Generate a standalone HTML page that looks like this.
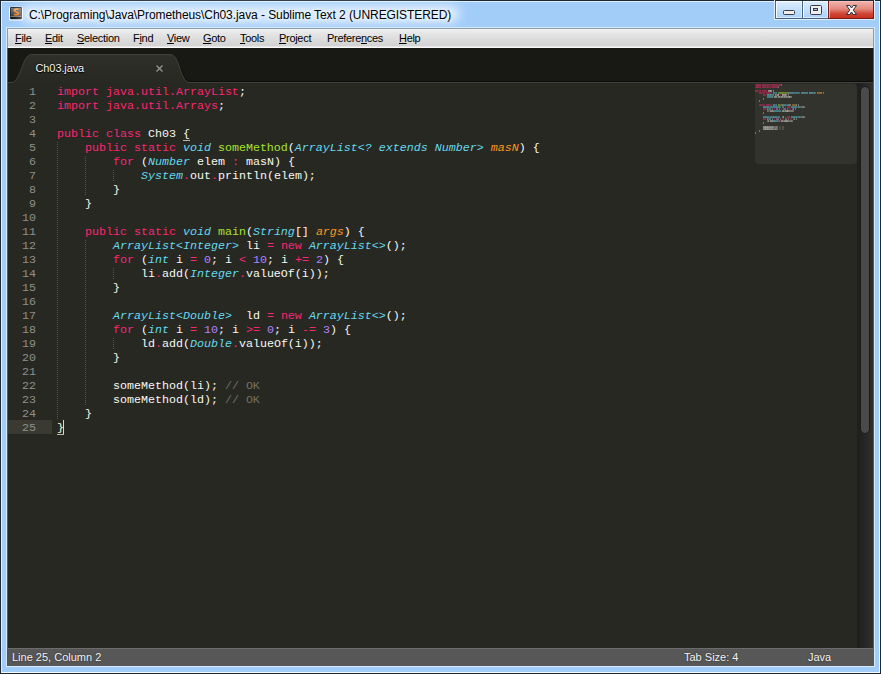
<!DOCTYPE html>
<html><head><meta charset="utf-8">
<style>
*{margin:0;padding:0;box-sizing:border-box}
html,body{width:881px;height:674px;overflow:hidden}
body{position:relative;background:#a3cdf9;font-family:"Liberation Sans",sans-serif}
.abs{position:absolute}
#frame-o{position:absolute;left:0;top:0;width:881px;height:674px;border:1px solid #1c2a38}
#frame-i{position:absolute;left:1px;top:1px;width:879px;height:672px;border:1px solid #dff0ff;border-bottom-color:#f4faff;border-right-color:#eef7ff}
#title{position:absolute;left:29px;top:7.5px;font-size:12px;letter-spacing:-0.07px;text-shadow:0 0 4px rgba(255,255,255,0.9),0 0 8px rgba(255,255,255,0.7);color:#000;white-space:nowrap;line-height:15px}
#glow{position:absolute;left:20px;top:5px;width:440px;height:18px;border-radius:9px;background:rgba(255,255,255,0.62);filter:blur(5px)}
#btns{position:absolute;left:775px;top:0;width:99px;height:19px}
.btn{position:absolute;top:1px;height:18px;border:1px solid #4a6380;border-top:none;box-shadow:inset 1px 1px 0 rgba(255,255,255,0.85),inset -1px -1px 0 rgba(255,255,255,0.5)}
#bmin{left:0;width:28px;background:linear-gradient(#dcedff,#c4e0fc 50%,#a9d1f9)}
#bmax{left:27px;width:27px;background:linear-gradient(#dcedff,#c4e0fc 50%,#a9d1f9)}
#bcls{left:53px;width:46px;background:linear-gradient(#f0b4ac,#e48c80 45%,#cf4535 75%,#c83224);border-color:#7c1a12;box-shadow:inset 1px 1px 0 rgba(255,200,190,0.7)}
#btnsh{position:absolute;left:774px;top:0;width:101px;height:20px;border:1px solid #dceeff;border-top:none}
#client{position:absolute;left:6px;top:27px;width:869px;height:640px;background:#4a5c70;border:1px solid #d4eaff}
#menubar{position:absolute;left:8px;top:29px;width:865px;height:19px;background:linear-gradient(#f3f3f3 0px,#e8e8e8 3px,#d2d2d2 17px,#f8f8f8 18px)}
.mi{position:absolute;top:32px;font-size:11px;color:#000;line-height:12px;letter-spacing:-0.3px}
.mi u{text-decoration:underline;text-underline-offset:1px}
#tabbar{position:absolute;left:8px;top:48px;width:865px;height:34px;background:#181814}
#editor{position:absolute;left:8px;top:83px;width:849px;height:565px;background:#272822}
#gutterhl{position:absolute;left:8px;top:420px;width:44px;height:14px;background:#3b3a32}
.ln{position:absolute;left:57px;height:14px;line-height:14px;font-family:"Liberation Mono",monospace;font-size:11.665px;white-space:pre;color:#f8f8f2}
.num{position:absolute;left:8px;width:28px;text-align:right;height:14px;line-height:14px;font-family:"Liberation Mono",monospace;font-size:11.665px;color:#8f908a}
.ul{color:#f8f8f2}
.uline{position:absolute;height:1px;width:7px;background:#b8b8b0}
.guide{position:absolute;width:1px;background:repeating-linear-gradient(#55554f 0 1px,transparent 1px 2px)}
#cursor{position:absolute;left:63px;top:420px;width:1px;height:14px;background:#d8d8d0}
#mmbox{position:absolute;left:755px;top:84px;width:102px;height:80px;background:#33332d;border-radius:4px}
.mm{position:absolute;left:755px;top:84px}
#scroll{position:absolute;left:857px;top:83px;width:16px;height:565px;background:linear-gradient(90deg,#1e1e1e,#2a2a2a 70%,#303030)}
#thumb{position:absolute;left:860px;top:86px;width:10px;height:348px;border-radius:5px;background:#4a4a4a;border:1px solid #1a1a1a}
#status{position:absolute;left:7px;top:648px;width:866px;height:18px;background:#575757;border-top:1px solid #6c6c6c;border-left:1px solid #4a5560}
.st{position:absolute;top:651px;font-size:11px;color:#f4f4f4;line-height:13px;white-space:nowrap;text-shadow:0 0 1.5px #222}
</style></head><body>
<div id="frame-o"></div><div id="frame-i"></div>
<svg class="abs" style="left:9px;top:6px" width="14" height="15" viewBox="0 0 14 15">
<defs><linearGradient id="ig" x1="0" y1="0" x2="0" y2="1"><stop offset="0" stop-color="#7a7a7a"/><stop offset="1" stop-color="#3c3c3c"/></linearGradient>
<linearGradient id="sg" x1="0" y1="0" x2="0" y2="1"><stop offset="0" stop-color="#f8b458"/><stop offset="1" stop-color="#f07414"/></linearGradient></defs>
<rect x="0" y="0.8" width="14" height="13.8" rx="1.5" fill="#f4f8ff"/>
<rect x="1" y="1" width="12" height="12.2" rx="1" fill="#262626"/>
<rect x="1.8" y="1.9" width="10.4" height="8.3" fill="url(#ig)"/>
<rect x="1.6" y="10.2" width="10.8" height="1" fill="#8c8c8c"/>
<rect x="1.6" y="11.2" width="10.8" height="1.6" fill="#121212"/>
<path d="M9.4 3.5 C8.4 2.7 5.4 2.8 5.4 4.5 C5.4 6.1 9.3 5.8 9.3 7.4 C9.3 9 6.6 9.1 5 8.3" stroke="url(#sg)" stroke-width="1.7" fill="none"/>
</svg>
<div id="glow"></div>
<div id="title">C:\Programing\Java\Prometheus\Ch03.java - Sublime Text 2 (UNREGISTERED)</div>
<div id="btnsh"></div><div id="btns">
 <div class="btn" id="bmin"></div><div class="btn" id="bmax"></div><div class="btn" id="bcls"></div>
 <div class="abs" style="left:8px;top:10px;width:12px;height:5px;background:#eeeeee;border:1px solid #3a3a48;border-radius:1.5px"></div>
 <div class="abs" style="left:35px;top:5px;width:12px;height:10px;background:#eeeeee;border:1.5px solid #3a3a48;border-radius:1.5px"><div class="abs" style="left:2px;top:2px;width:5px;height:3px;background:#9cc8f0;border:1px solid #3a3a48"></div></div>
 <svg class="abs" style="left:71px;top:5px" width="11" height="10" viewBox="0 0 11 10"><path d="M0.5 0.5 L3.8 0.5 L5.5 3 L7.2 0.5 L10.5 0.5 L7.3 5 L10.5 9.5 L7.2 9.5 L5.5 7 L3.8 9.5 L0.5 9.5 L3.7 5 Z" fill="#f4f4f4" stroke="#30303c" stroke-width="1" stroke-linejoin="round"/></svg>
</div>
<div id="client"></div>
<div class="abs" style="left:7px;top:28px;width:867px;height:20px;background:#8a9db2"></div>
<div id="menubar"></div>
<div class="mi" style="left:15px"><u>F</u>ile</div>
<div class="mi" style="left:45px"><u>E</u>dit</div>
<div class="mi" style="left:77px"><u>S</u>election</div>
<div class="mi" style="left:133px">F<u>i</u>nd</div>
<div class="mi" style="left:167px"><u>V</u>iew</div>
<div class="mi" style="left:203px"><u>G</u>oto</div>
<div class="mi" style="left:240px"><u>T</u>ools</div>
<div class="mi" style="left:279px"><u>P</u>roject</div>
<div class="mi" style="left:327px">Prefere<u>n</u>ces</div>
<div class="mi" style="left:399px"><u>H</u>elp</div>
<div id="tabbar"></div>
<svg class="abs" style="left:8px;top:48px" width="865" height="36" viewBox="0 0 865 36">
<defs><linearGradient id="tg" x1="0" y1="0" x2="0" y2="1"><stop offset="0" stop-color="#30302b"/><stop offset="1" stop-color="#272822"/></linearGradient></defs>
<path d="M-2 36 L-2 34.5 L4 34.5 C8 34.5 11 27 13.6 20.5 C16 13 19 6.5 23.5 6.5 L162.5 6.5 C167 6.5 169.5 13 171.8 20.5 C174.2 27 177 34.5 181.2 34.5 L181.2 36 Z" fill="url(#tg)"/>
<path d="M172.8 20.5 C175.2 27 178 33.5 182.2 33.5 L870 33.5" fill="none" stroke="#0c0c0a" stroke-width="1"/>
<path d="M-2 34.5 L4 34.5 C8 34.5 11 27 13.6 20.5 C16 13 19 6.5 23.5 6.5 L162.5 6.5 C167 6.5 169.5 13 171.8 20.5 C174.2 27 177 34.5 181.2 34.5 L870 34.5" fill="none" stroke="#41413b" stroke-width="1"/>
</svg>
<div class="abs" style="left:35.5px;top:62px;font-size:11px;color:#f4f4f4;line-height:13px;letter-spacing:-0.1px;text-shadow:0 0 1.5px #000,0 1px 1px #000">Ch03.java</div>
<svg class="abs" style="left:155px;top:64px" width="9" height="9" viewBox="0 0 9 9"><path d="M1.5 1.5 L7.5 7.5 M7.5 1.5 L1.5 7.5" stroke="#141411" stroke-width="3" stroke-opacity="0.6"/><path d="M1.5 1.5 L7.5 7.5 M7.5 1.5 L1.5 7.5" stroke="#90908b" stroke-width="1.7"/></svg>
<div id="editor"></div>
<div id="gutterhl"></div>
<div id="mmbox"></div>
<svg class="mm" width="110" height="60" viewBox="0 0 110 60"><rect x="0" y="0.3" width="1" height="1.3" fill="#f92672" fill-opacity="0.44"/><rect x="1" y="0.3" width="1" height="1.3" fill="#f92672" fill-opacity="0.80"/><rect x="2" y="0.3" width="1" height="1.3" fill="#f92672" fill-opacity="0.66"/><rect x="3" y="0.3" width="1" height="1.3" fill="#f92672" fill-opacity="0.66"/><rect x="4" y="0.3" width="1" height="1.3" fill="#f92672" fill-opacity="0.66"/><rect x="5" y="0.3" width="1" height="1.3" fill="#f92672" fill-opacity="0.66"/><rect x="7" y="0.3" width="1" height="1.3" fill="#f92672" fill-opacity="0.66"/><rect x="8" y="0.3" width="1" height="1.3" fill="#f92672" fill-opacity="0.66"/><rect x="9" y="0.3" width="1" height="1.3" fill="#f92672" fill-opacity="0.66"/><rect x="10" y="0.3" width="1" height="1.3" fill="#f92672" fill-opacity="0.66"/><rect x="11" y="0.3" width="1" height="1.3" fill="#f92672" fill-opacity="0.44"/><rect x="12" y="0.3" width="1" height="1.3" fill="#f92672" fill-opacity="0.66"/><rect x="13" y="0.3" width="1" height="1.3" fill="#f92672" fill-opacity="0.66"/><rect x="14" y="0.3" width="1" height="1.3" fill="#f92672" fill-opacity="0.44"/><rect x="15" y="0.3" width="1" height="1.3" fill="#f92672" fill-opacity="0.44"/><rect x="16" y="0.3" width="1" height="1.3" fill="#f92672" fill-opacity="0.44"/><rect x="17" y="0.3" width="1" height="1.3" fill="#f92672" fill-opacity="0.66"/><rect x="18" y="0.3" width="1" height="1.3" fill="#f92672" fill-opacity="0.66"/><rect x="19" y="0.3" width="1" height="1.3" fill="#f92672" fill-opacity="0.66"/><rect x="20" y="0.3" width="1" height="1.3" fill="#f92672" fill-opacity="0.66"/><rect x="21" y="0.3" width="1" height="1.3" fill="#f92672" fill-opacity="0.66"/><rect x="22" y="0.3" width="1" height="1.3" fill="#f92672" fill-opacity="0.66"/><rect x="23" y="0.3" width="1" height="1.3" fill="#f92672" fill-opacity="0.44"/><rect x="24" y="0.3" width="1" height="1.3" fill="#f92672" fill-opacity="0.66"/><rect x="25" y="0.3" width="1" height="1.3" fill="#f92672" fill-opacity="0.66"/><rect x="26" y="0.3" width="1" height="1.3" fill="#f8f8f2" fill-opacity="0.44"/><rect x="0" y="2.4" width="1" height="1.3" fill="#f92672" fill-opacity="0.44"/><rect x="1" y="2.4" width="1" height="1.3" fill="#f92672" fill-opacity="0.80"/><rect x="2" y="2.4" width="1" height="1.3" fill="#f92672" fill-opacity="0.66"/><rect x="3" y="2.4" width="1" height="1.3" fill="#f92672" fill-opacity="0.66"/><rect x="4" y="2.4" width="1" height="1.3" fill="#f92672" fill-opacity="0.66"/><rect x="5" y="2.4" width="1" height="1.3" fill="#f92672" fill-opacity="0.66"/><rect x="7" y="2.4" width="1" height="1.3" fill="#f92672" fill-opacity="0.66"/><rect x="8" y="2.4" width="1" height="1.3" fill="#f92672" fill-opacity="0.66"/><rect x="9" y="2.4" width="1" height="1.3" fill="#f92672" fill-opacity="0.66"/><rect x="10" y="2.4" width="1" height="1.3" fill="#f92672" fill-opacity="0.66"/><rect x="11" y="2.4" width="1" height="1.3" fill="#f92672" fill-opacity="0.44"/><rect x="12" y="2.4" width="1" height="1.3" fill="#f92672" fill-opacity="0.66"/><rect x="13" y="2.4" width="1" height="1.3" fill="#f92672" fill-opacity="0.66"/><rect x="14" y="2.4" width="1" height="1.3" fill="#f92672" fill-opacity="0.44"/><rect x="15" y="2.4" width="1" height="1.3" fill="#f92672" fill-opacity="0.44"/><rect x="16" y="2.4" width="1" height="1.3" fill="#f92672" fill-opacity="0.44"/><rect x="17" y="2.4" width="1" height="1.3" fill="#f92672" fill-opacity="0.66"/><rect x="18" y="2.4" width="1" height="1.3" fill="#f92672" fill-opacity="0.66"/><rect x="19" y="2.4" width="1" height="1.3" fill="#f92672" fill-opacity="0.66"/><rect x="20" y="2.4" width="1" height="1.3" fill="#f92672" fill-opacity="0.66"/><rect x="21" y="2.4" width="1" height="1.3" fill="#f92672" fill-opacity="0.66"/><rect x="22" y="2.4" width="1" height="1.3" fill="#f92672" fill-opacity="0.66"/><rect x="23" y="2.4" width="1" height="1.3" fill="#f8f8f2" fill-opacity="0.44"/><rect x="0" y="6.3" width="1" height="1.3" fill="#f92672" fill-opacity="0.66"/><rect x="1" y="6.3" width="1" height="1.3" fill="#f92672" fill-opacity="0.66"/><rect x="2" y="6.3" width="1" height="1.3" fill="#f92672" fill-opacity="0.66"/><rect x="3" y="6.3" width="1" height="1.3" fill="#f92672" fill-opacity="0.44"/><rect x="4" y="6.3" width="1" height="1.3" fill="#f92672" fill-opacity="0.44"/><rect x="5" y="6.3" width="1" height="1.3" fill="#f92672" fill-opacity="0.66"/><rect x="7" y="6.3" width="1" height="1.3" fill="#f92672" fill-opacity="0.66"/><rect x="8" y="6.3" width="1" height="1.3" fill="#f92672" fill-opacity="0.44"/><rect x="9" y="6.3" width="1" height="1.3" fill="#f92672" fill-opacity="0.66"/><rect x="10" y="6.3" width="1" height="1.3" fill="#f92672" fill-opacity="0.66"/><rect x="11" y="6.3" width="1" height="1.3" fill="#f92672" fill-opacity="0.66"/><rect x="13" y="6.3" width="1" height="1.3" fill="#f8f8f2" fill-opacity="0.66"/><rect x="14" y="6.3" width="1" height="1.3" fill="#f8f8f2" fill-opacity="0.66"/><rect x="15" y="6.3" width="1" height="1.3" fill="#f8f8f2" fill-opacity="0.80"/><rect x="16" y="6.3" width="1" height="1.3" fill="#f8f8f2" fill-opacity="0.66"/><rect x="18" y="6.3" width="1" height="1.3" fill="#f8f8f2" fill-opacity="0.53"/><rect x="4" y="8.3" width="1" height="1.3" fill="#f92672" fill-opacity="0.66"/><rect x="5" y="8.3" width="1" height="1.3" fill="#f92672" fill-opacity="0.66"/><rect x="6" y="8.3" width="1" height="1.3" fill="#f92672" fill-opacity="0.66"/><rect x="7" y="8.3" width="1" height="1.3" fill="#f92672" fill-opacity="0.44"/><rect x="8" y="8.3" width="1" height="1.3" fill="#f92672" fill-opacity="0.44"/><rect x="9" y="8.3" width="1" height="1.3" fill="#f92672" fill-opacity="0.66"/><rect x="11" y="8.3" width="1" height="1.3" fill="#f92672" fill-opacity="0.66"/><rect x="12" y="8.3" width="1" height="1.3" fill="#f92672" fill-opacity="0.66"/><rect x="13" y="8.3" width="1" height="1.3" fill="#f92672" fill-opacity="0.66"/><rect x="14" y="8.3" width="1" height="1.3" fill="#f92672" fill-opacity="0.66"/><rect x="15" y="8.3" width="1" height="1.3" fill="#f92672" fill-opacity="0.44"/><rect x="16" y="8.3" width="1" height="1.3" fill="#f92672" fill-opacity="0.66"/><rect x="18" y="8.3" width="1" height="1.3" fill="#66d9ef" fill-opacity="0.66"/><rect x="19" y="8.3" width="1" height="1.3" fill="#66d9ef" fill-opacity="0.66"/><rect x="20" y="8.3" width="1" height="1.3" fill="#66d9ef" fill-opacity="0.44"/><rect x="21" y="8.3" width="1" height="1.3" fill="#66d9ef" fill-opacity="0.66"/><rect x="23" y="8.3" width="1" height="1.3" fill="#a6e22e" fill-opacity="0.66"/><rect x="24" y="8.3" width="1" height="1.3" fill="#a6e22e" fill-opacity="0.66"/><rect x="25" y="8.3" width="1" height="1.3" fill="#a6e22e" fill-opacity="0.80"/><rect x="26" y="8.3" width="1" height="1.3" fill="#a6e22e" fill-opacity="0.66"/><rect x="27" y="8.3" width="1" height="1.3" fill="#a6e22e" fill-opacity="0.80"/><rect x="28" y="8.3" width="1" height="1.3" fill="#a6e22e" fill-opacity="0.66"/><rect x="29" y="8.3" width="1" height="1.3" fill="#a6e22e" fill-opacity="0.66"/><rect x="30" y="8.3" width="1" height="1.3" fill="#a6e22e" fill-opacity="0.66"/><rect x="31" y="8.3" width="1" height="1.3" fill="#a6e22e" fill-opacity="0.66"/><rect x="32" y="8.3" width="1" height="1.3" fill="#a6e22e" fill-opacity="0.66"/><rect x="33" y="8.3" width="1" height="1.3" fill="#f8f8f2" fill-opacity="0.53"/><rect x="34" y="8.3" width="1" height="1.3" fill="#66d9ef" fill-opacity="0.66"/><rect x="35" y="8.3" width="1" height="1.3" fill="#66d9ef" fill-opacity="0.66"/><rect x="36" y="8.3" width="1" height="1.3" fill="#66d9ef" fill-opacity="0.66"/><rect x="37" y="8.3" width="1" height="1.3" fill="#66d9ef" fill-opacity="0.66"/><rect x="38" y="8.3" width="1" height="1.3" fill="#66d9ef" fill-opacity="0.66"/><rect x="39" y="8.3" width="1" height="1.3" fill="#66d9ef" fill-opacity="0.66"/><rect x="40" y="8.3" width="1" height="1.3" fill="#66d9ef" fill-opacity="0.44"/><rect x="41" y="8.3" width="1" height="1.3" fill="#66d9ef" fill-opacity="0.66"/><rect x="42" y="8.3" width="1" height="1.3" fill="#66d9ef" fill-opacity="0.66"/><rect x="43" y="8.3" width="1" height="1.3" fill="#66d9ef" fill-opacity="0.53"/><rect x="44" y="8.3" width="1" height="1.3" fill="#66d9ef" fill-opacity="0.53"/><rect x="46" y="8.3" width="1" height="1.3" fill="#66d9ef" fill-opacity="0.66"/><rect x="47" y="8.3" width="1" height="1.3" fill="#66d9ef" fill-opacity="0.66"/><rect x="48" y="8.3" width="1" height="1.3" fill="#66d9ef" fill-opacity="0.66"/><rect x="49" y="8.3" width="1" height="1.3" fill="#66d9ef" fill-opacity="0.66"/><rect x="50" y="8.3" width="1" height="1.3" fill="#66d9ef" fill-opacity="0.66"/><rect x="51" y="8.3" width="1" height="1.3" fill="#66d9ef" fill-opacity="0.66"/><rect x="52" y="8.3" width="1" height="1.3" fill="#66d9ef" fill-opacity="0.66"/><rect x="54" y="8.3" width="1" height="1.3" fill="#66d9ef" fill-opacity="0.80"/><rect x="55" y="8.3" width="1" height="1.3" fill="#66d9ef" fill-opacity="0.66"/><rect x="56" y="8.3" width="1" height="1.3" fill="#66d9ef" fill-opacity="0.80"/><rect x="57" y="8.3" width="1" height="1.3" fill="#66d9ef" fill-opacity="0.66"/><rect x="58" y="8.3" width="1" height="1.3" fill="#66d9ef" fill-opacity="0.66"/><rect x="59" y="8.3" width="1" height="1.3" fill="#66d9ef" fill-opacity="0.66"/><rect x="60" y="8.3" width="1" height="1.3" fill="#66d9ef" fill-opacity="0.53"/><rect x="62" y="8.3" width="1" height="1.3" fill="#fd971f" fill-opacity="0.80"/><rect x="63" y="8.3" width="1" height="1.3" fill="#fd971f" fill-opacity="0.66"/><rect x="64" y="8.3" width="1" height="1.3" fill="#fd971f" fill-opacity="0.66"/><rect x="65" y="8.3" width="1" height="1.3" fill="#fd971f" fill-opacity="0.80"/><rect x="66" y="8.3" width="1" height="1.3" fill="#f8f8f2" fill-opacity="0.53"/><rect x="68" y="8.3" width="1" height="1.3" fill="#f8f8f2" fill-opacity="0.53"/><rect x="8" y="10.3" width="1" height="1.3" fill="#f92672" fill-opacity="0.66"/><rect x="9" y="10.3" width="1" height="1.3" fill="#f92672" fill-opacity="0.66"/><rect x="10" y="10.3" width="1" height="1.3" fill="#f92672" fill-opacity="0.66"/><rect x="12" y="10.3" width="1" height="1.3" fill="#f8f8f2" fill-opacity="0.53"/><rect x="13" y="10.3" width="1" height="1.3" fill="#66d9ef" fill-opacity="0.80"/><rect x="14" y="10.3" width="1" height="1.3" fill="#66d9ef" fill-opacity="0.66"/><rect x="15" y="10.3" width="1" height="1.3" fill="#66d9ef" fill-opacity="0.80"/><rect x="16" y="10.3" width="1" height="1.3" fill="#66d9ef" fill-opacity="0.66"/><rect x="17" y="10.3" width="1" height="1.3" fill="#66d9ef" fill-opacity="0.66"/><rect x="18" y="10.3" width="1" height="1.3" fill="#66d9ef" fill-opacity="0.66"/><rect x="20" y="10.3" width="1" height="1.3" fill="#f8f8f2" fill-opacity="0.66"/><rect x="21" y="10.3" width="1" height="1.3" fill="#f8f8f2" fill-opacity="0.44"/><rect x="22" y="10.3" width="1" height="1.3" fill="#f8f8f2" fill-opacity="0.66"/><rect x="23" y="10.3" width="1" height="1.3" fill="#f8f8f2" fill-opacity="0.80"/><rect x="25" y="10.3" width="1" height="1.3" fill="#f92672" fill-opacity="0.44"/><rect x="27" y="10.3" width="1" height="1.3" fill="#f8f8f2" fill-opacity="0.80"/><rect x="28" y="10.3" width="1" height="1.3" fill="#f8f8f2" fill-opacity="0.66"/><rect x="29" y="10.3" width="1" height="1.3" fill="#f8f8f2" fill-opacity="0.66"/><rect x="30" y="10.3" width="1" height="1.3" fill="#f8f8f2" fill-opacity="0.80"/><rect x="31" y="10.3" width="1" height="1.3" fill="#f8f8f2" fill-opacity="0.53"/><rect x="33" y="10.3" width="1" height="1.3" fill="#f8f8f2" fill-opacity="0.53"/><rect x="12" y="12.3" width="1" height="1.3" fill="#66d9ef" fill-opacity="0.66"/><rect x="13" y="12.3" width="1" height="1.3" fill="#66d9ef" fill-opacity="0.66"/><rect x="14" y="12.3" width="1" height="1.3" fill="#66d9ef" fill-opacity="0.66"/><rect x="15" y="12.3" width="1" height="1.3" fill="#66d9ef" fill-opacity="0.66"/><rect x="16" y="12.3" width="1" height="1.3" fill="#66d9ef" fill-opacity="0.66"/><rect x="17" y="12.3" width="1" height="1.3" fill="#66d9ef" fill-opacity="0.80"/><rect x="18" y="12.3" width="1" height="1.3" fill="#f92672" fill-opacity="0.44"/><rect x="19" y="12.3" width="1" height="1.3" fill="#f8f8f2" fill-opacity="0.66"/><rect x="20" y="12.3" width="1" height="1.3" fill="#f8f8f2" fill-opacity="0.66"/><rect x="21" y="12.3" width="1" height="1.3" fill="#f8f8f2" fill-opacity="0.66"/><rect x="22" y="12.3" width="1" height="1.3" fill="#f92672" fill-opacity="0.44"/><rect x="23" y="12.3" width="1" height="1.3" fill="#f8f8f2" fill-opacity="0.66"/><rect x="24" y="12.3" width="1" height="1.3" fill="#f8f8f2" fill-opacity="0.66"/><rect x="25" y="12.3" width="1" height="1.3" fill="#f8f8f2" fill-opacity="0.44"/><rect x="26" y="12.3" width="1" height="1.3" fill="#f8f8f2" fill-opacity="0.66"/><rect x="27" y="12.3" width="1" height="1.3" fill="#f8f8f2" fill-opacity="0.66"/><rect x="28" y="12.3" width="1" height="1.3" fill="#f8f8f2" fill-opacity="0.44"/><rect x="29" y="12.3" width="1" height="1.3" fill="#f8f8f2" fill-opacity="0.66"/><rect x="30" y="12.3" width="1" height="1.3" fill="#f8f8f2" fill-opacity="0.53"/><rect x="31" y="12.3" width="1" height="1.3" fill="#f8f8f2" fill-opacity="0.66"/><rect x="32" y="12.3" width="1" height="1.3" fill="#f8f8f2" fill-opacity="0.44"/><rect x="33" y="12.3" width="1" height="1.3" fill="#f8f8f2" fill-opacity="0.66"/><rect x="34" y="12.3" width="1" height="1.3" fill="#f8f8f2" fill-opacity="0.80"/><rect x="35" y="12.3" width="1" height="1.3" fill="#f8f8f2" fill-opacity="0.53"/><rect x="36" y="12.3" width="1" height="1.3" fill="#f8f8f2" fill-opacity="0.44"/><rect x="8" y="14.3" width="1" height="1.3" fill="#f8f8f2" fill-opacity="0.53"/><rect x="4" y="16.4" width="1" height="1.3" fill="#f8f8f2" fill-opacity="0.53"/><rect x="4" y="20.4" width="1" height="1.3" fill="#f92672" fill-opacity="0.66"/><rect x="5" y="20.4" width="1" height="1.3" fill="#f92672" fill-opacity="0.66"/><rect x="6" y="20.4" width="1" height="1.3" fill="#f92672" fill-opacity="0.66"/><rect x="7" y="20.4" width="1" height="1.3" fill="#f92672" fill-opacity="0.44"/><rect x="8" y="20.4" width="1" height="1.3" fill="#f92672" fill-opacity="0.44"/><rect x="9" y="20.4" width="1" height="1.3" fill="#f92672" fill-opacity="0.66"/><rect x="11" y="20.4" width="1" height="1.3" fill="#f92672" fill-opacity="0.66"/><rect x="12" y="20.4" width="1" height="1.3" fill="#f92672" fill-opacity="0.66"/><rect x="13" y="20.4" width="1" height="1.3" fill="#f92672" fill-opacity="0.66"/><rect x="14" y="20.4" width="1" height="1.3" fill="#f92672" fill-opacity="0.66"/><rect x="15" y="20.4" width="1" height="1.3" fill="#f92672" fill-opacity="0.44"/><rect x="16" y="20.4" width="1" height="1.3" fill="#f92672" fill-opacity="0.66"/><rect x="18" y="20.4" width="1" height="1.3" fill="#66d9ef" fill-opacity="0.66"/><rect x="19" y="20.4" width="1" height="1.3" fill="#66d9ef" fill-opacity="0.66"/><rect x="20" y="20.4" width="1" height="1.3" fill="#66d9ef" fill-opacity="0.44"/><rect x="21" y="20.4" width="1" height="1.3" fill="#66d9ef" fill-opacity="0.66"/><rect x="23" y="20.4" width="1" height="1.3" fill="#a6e22e" fill-opacity="0.80"/><rect x="24" y="20.4" width="1" height="1.3" fill="#a6e22e" fill-opacity="0.66"/><rect x="25" y="20.4" width="1" height="1.3" fill="#a6e22e" fill-opacity="0.44"/><rect x="26" y="20.4" width="1" height="1.3" fill="#a6e22e" fill-opacity="0.66"/><rect x="27" y="20.4" width="1" height="1.3" fill="#f8f8f2" fill-opacity="0.53"/><rect x="28" y="20.4" width="1" height="1.3" fill="#66d9ef" fill-opacity="0.66"/><rect x="29" y="20.4" width="1" height="1.3" fill="#66d9ef" fill-opacity="0.66"/><rect x="30" y="20.4" width="1" height="1.3" fill="#66d9ef" fill-opacity="0.66"/><rect x="31" y="20.4" width="1" height="1.3" fill="#66d9ef" fill-opacity="0.44"/><rect x="32" y="20.4" width="1" height="1.3" fill="#66d9ef" fill-opacity="0.66"/><rect x="33" y="20.4" width="1" height="1.3" fill="#66d9ef" fill-opacity="0.66"/><rect x="34" y="20.4" width="1" height="1.3" fill="#f8f8f2" fill-opacity="0.53"/><rect x="35" y="20.4" width="1" height="1.3" fill="#f8f8f2" fill-opacity="0.53"/><rect x="37" y="20.4" width="1" height="1.3" fill="#fd971f" fill-opacity="0.66"/><rect x="38" y="20.4" width="1" height="1.3" fill="#fd971f" fill-opacity="0.66"/><rect x="39" y="20.4" width="1" height="1.3" fill="#fd971f" fill-opacity="0.66"/><rect x="40" y="20.4" width="1" height="1.3" fill="#fd971f" fill-opacity="0.66"/><rect x="41" y="20.4" width="1" height="1.3" fill="#f8f8f2" fill-opacity="0.53"/><rect x="43" y="20.4" width="1" height="1.3" fill="#f8f8f2" fill-opacity="0.53"/><rect x="8" y="22.4" width="1" height="1.3" fill="#66d9ef" fill-opacity="0.66"/><rect x="9" y="22.4" width="1" height="1.3" fill="#66d9ef" fill-opacity="0.66"/><rect x="10" y="22.4" width="1" height="1.3" fill="#66d9ef" fill-opacity="0.66"/><rect x="11" y="22.4" width="1" height="1.3" fill="#66d9ef" fill-opacity="0.66"/><rect x="12" y="22.4" width="1" height="1.3" fill="#66d9ef" fill-opacity="0.66"/><rect x="13" y="22.4" width="1" height="1.3" fill="#66d9ef" fill-opacity="0.66"/><rect x="14" y="22.4" width="1" height="1.3" fill="#66d9ef" fill-opacity="0.44"/><rect x="15" y="22.4" width="1" height="1.3" fill="#66d9ef" fill-opacity="0.66"/><rect x="16" y="22.4" width="1" height="1.3" fill="#66d9ef" fill-opacity="0.66"/><rect x="17" y="22.4" width="1" height="1.3" fill="#66d9ef" fill-opacity="0.53"/><rect x="18" y="22.4" width="1" height="1.3" fill="#66d9ef" fill-opacity="0.66"/><rect x="19" y="22.4" width="1" height="1.3" fill="#66d9ef" fill-opacity="0.66"/><rect x="20" y="22.4" width="1" height="1.3" fill="#66d9ef" fill-opacity="0.66"/><rect x="21" y="22.4" width="1" height="1.3" fill="#66d9ef" fill-opacity="0.66"/><rect x="22" y="22.4" width="1" height="1.3" fill="#66d9ef" fill-opacity="0.66"/><rect x="23" y="22.4" width="1" height="1.3" fill="#66d9ef" fill-opacity="0.66"/><rect x="24" y="22.4" width="1" height="1.3" fill="#66d9ef" fill-opacity="0.66"/><rect x="25" y="22.4" width="1" height="1.3" fill="#66d9ef" fill-opacity="0.53"/><rect x="27" y="22.4" width="1" height="1.3" fill="#f8f8f2" fill-opacity="0.44"/><rect x="28" y="22.4" width="1" height="1.3" fill="#f8f8f2" fill-opacity="0.44"/><rect x="30" y="22.4" width="1" height="1.3" fill="#f92672" fill-opacity="0.53"/><rect x="32" y="22.4" width="1" height="1.3" fill="#f92672" fill-opacity="0.66"/><rect x="33" y="22.4" width="1" height="1.3" fill="#f92672" fill-opacity="0.66"/><rect x="34" y="22.4" width="1" height="1.3" fill="#f92672" fill-opacity="0.80"/><rect x="36" y="22.4" width="1" height="1.3" fill="#66d9ef" fill-opacity="0.66"/><rect x="37" y="22.4" width="1" height="1.3" fill="#66d9ef" fill-opacity="0.66"/><rect x="38" y="22.4" width="1" height="1.3" fill="#66d9ef" fill-opacity="0.66"/><rect x="39" y="22.4" width="1" height="1.3" fill="#66d9ef" fill-opacity="0.66"/><rect x="40" y="22.4" width="1" height="1.3" fill="#66d9ef" fill-opacity="0.66"/><rect x="41" y="22.4" width="1" height="1.3" fill="#66d9ef" fill-opacity="0.66"/><rect x="42" y="22.4" width="1" height="1.3" fill="#66d9ef" fill-opacity="0.44"/><rect x="43" y="22.4" width="1" height="1.3" fill="#66d9ef" fill-opacity="0.66"/><rect x="44" y="22.4" width="1" height="1.3" fill="#66d9ef" fill-opacity="0.66"/><rect x="45" y="22.4" width="1" height="1.3" fill="#66d9ef" fill-opacity="0.53"/><rect x="46" y="22.4" width="1" height="1.3" fill="#66d9ef" fill-opacity="0.53"/><rect x="47" y="22.4" width="1" height="1.3" fill="#f8f8f2" fill-opacity="0.53"/><rect x="48" y="22.4" width="1" height="1.3" fill="#f8f8f2" fill-opacity="0.53"/><rect x="49" y="22.4" width="1" height="1.3" fill="#f8f8f2" fill-opacity="0.44"/><rect x="8" y="24.4" width="1" height="1.3" fill="#f92672" fill-opacity="0.66"/><rect x="9" y="24.4" width="1" height="1.3" fill="#f92672" fill-opacity="0.66"/><rect x="10" y="24.4" width="1" height="1.3" fill="#f92672" fill-opacity="0.66"/><rect x="12" y="24.4" width="1" height="1.3" fill="#f8f8f2" fill-opacity="0.53"/><rect x="13" y="24.4" width="1" height="1.3" fill="#66d9ef" fill-opacity="0.44"/><rect x="14" y="24.4" width="1" height="1.3" fill="#66d9ef" fill-opacity="0.66"/><rect x="15" y="24.4" width="1" height="1.3" fill="#66d9ef" fill-opacity="0.66"/><rect x="17" y="24.4" width="1" height="1.3" fill="#f8f8f2" fill-opacity="0.44"/><rect x="19" y="24.4" width="1" height="1.3" fill="#f92672" fill-opacity="0.53"/><rect x="21" y="24.4" width="1" height="1.3" fill="#ae81ff" fill-opacity="0.80"/><rect x="22" y="24.4" width="1" height="1.3" fill="#f8f8f2" fill-opacity="0.44"/><rect x="24" y="24.4" width="1" height="1.3" fill="#f8f8f2" fill-opacity="0.44"/><rect x="26" y="24.4" width="1" height="1.3" fill="#f92672" fill-opacity="0.53"/><rect x="28" y="24.4" width="1" height="1.3" fill="#ae81ff" fill-opacity="0.66"/><rect x="29" y="24.4" width="1" height="1.3" fill="#ae81ff" fill-opacity="0.80"/><rect x="30" y="24.4" width="1" height="1.3" fill="#f8f8f2" fill-opacity="0.44"/><rect x="32" y="24.4" width="1" height="1.3" fill="#f8f8f2" fill-opacity="0.44"/><rect x="34" y="24.4" width="1" height="1.3" fill="#f92672" fill-opacity="0.53"/><rect x="35" y="24.4" width="1" height="1.3" fill="#f92672" fill-opacity="0.53"/><rect x="37" y="24.4" width="1" height="1.3" fill="#ae81ff" fill-opacity="0.66"/><rect x="38" y="24.4" width="1" height="1.3" fill="#f8f8f2" fill-opacity="0.53"/><rect x="40" y="24.4" width="1" height="1.3" fill="#f8f8f2" fill-opacity="0.53"/><rect x="12" y="26.4" width="1" height="1.3" fill="#f8f8f2" fill-opacity="0.44"/><rect x="13" y="26.4" width="1" height="1.3" fill="#f8f8f2" fill-opacity="0.44"/><rect x="14" y="26.4" width="1" height="1.3" fill="#f92672" fill-opacity="0.44"/><rect x="15" y="26.4" width="1" height="1.3" fill="#f8f8f2" fill-opacity="0.66"/><rect x="16" y="26.4" width="1" height="1.3" fill="#f8f8f2" fill-opacity="0.66"/><rect x="17" y="26.4" width="1" height="1.3" fill="#f8f8f2" fill-opacity="0.66"/><rect x="18" y="26.4" width="1" height="1.3" fill="#f8f8f2" fill-opacity="0.53"/><rect x="19" y="26.4" width="1" height="1.3" fill="#66d9ef" fill-opacity="0.66"/><rect x="20" y="26.4" width="1" height="1.3" fill="#66d9ef" fill-opacity="0.66"/><rect x="21" y="26.4" width="1" height="1.3" fill="#66d9ef" fill-opacity="0.66"/><rect x="22" y="26.4" width="1" height="1.3" fill="#66d9ef" fill-opacity="0.66"/><rect x="23" y="26.4" width="1" height="1.3" fill="#66d9ef" fill-opacity="0.66"/><rect x="24" y="26.4" width="1" height="1.3" fill="#66d9ef" fill-opacity="0.66"/><rect x="25" y="26.4" width="1" height="1.3" fill="#66d9ef" fill-opacity="0.66"/><rect x="26" y="26.4" width="1" height="1.3" fill="#f92672" fill-opacity="0.44"/><rect x="27" y="26.4" width="1" height="1.3" fill="#f8f8f2" fill-opacity="0.66"/><rect x="28" y="26.4" width="1" height="1.3" fill="#f8f8f2" fill-opacity="0.66"/><rect x="29" y="26.4" width="1" height="1.3" fill="#f8f8f2" fill-opacity="0.44"/><rect x="30" y="26.4" width="1" height="1.3" fill="#f8f8f2" fill-opacity="0.66"/><rect x="31" y="26.4" width="1" height="1.3" fill="#f8f8f2" fill-opacity="0.66"/><rect x="32" y="26.4" width="1" height="1.3" fill="#f8f8f2" fill-opacity="0.80"/><rect x="33" y="26.4" width="1" height="1.3" fill="#f8f8f2" fill-opacity="0.66"/><rect x="34" y="26.4" width="1" height="1.3" fill="#f8f8f2" fill-opacity="0.53"/><rect x="35" y="26.4" width="1" height="1.3" fill="#f8f8f2" fill-opacity="0.44"/><rect x="36" y="26.4" width="1" height="1.3" fill="#f8f8f2" fill-opacity="0.53"/><rect x="37" y="26.4" width="1" height="1.3" fill="#f8f8f2" fill-opacity="0.53"/><rect x="38" y="26.4" width="1" height="1.3" fill="#f8f8f2" fill-opacity="0.44"/><rect x="8" y="28.4" width="1" height="1.3" fill="#f8f8f2" fill-opacity="0.53"/><rect x="8" y="32.4" width="1" height="1.3" fill="#66d9ef" fill-opacity="0.66"/><rect x="9" y="32.4" width="1" height="1.3" fill="#66d9ef" fill-opacity="0.66"/><rect x="10" y="32.4" width="1" height="1.3" fill="#66d9ef" fill-opacity="0.66"/><rect x="11" y="32.4" width="1" height="1.3" fill="#66d9ef" fill-opacity="0.66"/><rect x="12" y="32.4" width="1" height="1.3" fill="#66d9ef" fill-opacity="0.66"/><rect x="13" y="32.4" width="1" height="1.3" fill="#66d9ef" fill-opacity="0.66"/><rect x="14" y="32.4" width="1" height="1.3" fill="#66d9ef" fill-opacity="0.44"/><rect x="15" y="32.4" width="1" height="1.3" fill="#66d9ef" fill-opacity="0.66"/><rect x="16" y="32.4" width="1" height="1.3" fill="#66d9ef" fill-opacity="0.66"/><rect x="17" y="32.4" width="1" height="1.3" fill="#66d9ef" fill-opacity="0.53"/><rect x="18" y="32.4" width="1" height="1.3" fill="#66d9ef" fill-opacity="0.80"/><rect x="19" y="32.4" width="1" height="1.3" fill="#66d9ef" fill-opacity="0.66"/><rect x="20" y="32.4" width="1" height="1.3" fill="#66d9ef" fill-opacity="0.66"/><rect x="21" y="32.4" width="1" height="1.3" fill="#66d9ef" fill-opacity="0.66"/><rect x="22" y="32.4" width="1" height="1.3" fill="#66d9ef" fill-opacity="0.44"/><rect x="23" y="32.4" width="1" height="1.3" fill="#66d9ef" fill-opacity="0.66"/><rect x="24" y="32.4" width="1" height="1.3" fill="#66d9ef" fill-opacity="0.53"/><rect x="27" y="32.4" width="1" height="1.3" fill="#f8f8f2" fill-opacity="0.44"/><rect x="28" y="32.4" width="1" height="1.3" fill="#f8f8f2" fill-opacity="0.66"/><rect x="30" y="32.4" width="1" height="1.3" fill="#f92672" fill-opacity="0.53"/><rect x="32" y="32.4" width="1" height="1.3" fill="#f92672" fill-opacity="0.66"/><rect x="33" y="32.4" width="1" height="1.3" fill="#f92672" fill-opacity="0.66"/><rect x="34" y="32.4" width="1" height="1.3" fill="#f92672" fill-opacity="0.80"/><rect x="36" y="32.4" width="1" height="1.3" fill="#66d9ef" fill-opacity="0.66"/><rect x="37" y="32.4" width="1" height="1.3" fill="#66d9ef" fill-opacity="0.66"/><rect x="38" y="32.4" width="1" height="1.3" fill="#66d9ef" fill-opacity="0.66"/><rect x="39" y="32.4" width="1" height="1.3" fill="#66d9ef" fill-opacity="0.66"/><rect x="40" y="32.4" width="1" height="1.3" fill="#66d9ef" fill-opacity="0.66"/><rect x="41" y="32.4" width="1" height="1.3" fill="#66d9ef" fill-opacity="0.66"/><rect x="42" y="32.4" width="1" height="1.3" fill="#66d9ef" fill-opacity="0.44"/><rect x="43" y="32.4" width="1" height="1.3" fill="#66d9ef" fill-opacity="0.66"/><rect x="44" y="32.4" width="1" height="1.3" fill="#66d9ef" fill-opacity="0.66"/><rect x="45" y="32.4" width="1" height="1.3" fill="#66d9ef" fill-opacity="0.53"/><rect x="46" y="32.4" width="1" height="1.3" fill="#66d9ef" fill-opacity="0.53"/><rect x="47" y="32.4" width="1" height="1.3" fill="#f8f8f2" fill-opacity="0.53"/><rect x="48" y="32.4" width="1" height="1.3" fill="#f8f8f2" fill-opacity="0.53"/><rect x="49" y="32.4" width="1" height="1.3" fill="#f8f8f2" fill-opacity="0.44"/><rect x="8" y="34.4" width="1" height="1.3" fill="#f92672" fill-opacity="0.66"/><rect x="9" y="34.4" width="1" height="1.3" fill="#f92672" fill-opacity="0.66"/><rect x="10" y="34.4" width="1" height="1.3" fill="#f92672" fill-opacity="0.66"/><rect x="12" y="34.4" width="1" height="1.3" fill="#f8f8f2" fill-opacity="0.53"/><rect x="13" y="34.4" width="1" height="1.3" fill="#66d9ef" fill-opacity="0.44"/><rect x="14" y="34.4" width="1" height="1.3" fill="#66d9ef" fill-opacity="0.66"/><rect x="15" y="34.4" width="1" height="1.3" fill="#66d9ef" fill-opacity="0.66"/><rect x="17" y="34.4" width="1" height="1.3" fill="#f8f8f2" fill-opacity="0.44"/><rect x="19" y="34.4" width="1" height="1.3" fill="#f92672" fill-opacity="0.53"/><rect x="21" y="34.4" width="1" height="1.3" fill="#ae81ff" fill-opacity="0.66"/><rect x="22" y="34.4" width="1" height="1.3" fill="#ae81ff" fill-opacity="0.80"/><rect x="23" y="34.4" width="1" height="1.3" fill="#f8f8f2" fill-opacity="0.44"/><rect x="25" y="34.4" width="1" height="1.3" fill="#f8f8f2" fill-opacity="0.44"/><rect x="27" y="34.4" width="1" height="1.3" fill="#f92672" fill-opacity="0.53"/><rect x="28" y="34.4" width="1" height="1.3" fill="#f92672" fill-opacity="0.53"/><rect x="30" y="34.4" width="1" height="1.3" fill="#ae81ff" fill-opacity="0.80"/><rect x="31" y="34.4" width="1" height="1.3" fill="#f8f8f2" fill-opacity="0.44"/><rect x="33" y="34.4" width="1" height="1.3" fill="#f8f8f2" fill-opacity="0.44"/><rect x="35" y="34.4" width="1" height="1.3" fill="#f92672" fill-opacity="0.53"/><rect x="36" y="34.4" width="1" height="1.3" fill="#f92672" fill-opacity="0.53"/><rect x="38" y="34.4" width="1" height="1.3" fill="#ae81ff" fill-opacity="0.66"/><rect x="39" y="34.4" width="1" height="1.3" fill="#f8f8f2" fill-opacity="0.53"/><rect x="41" y="34.4" width="1" height="1.3" fill="#f8f8f2" fill-opacity="0.53"/><rect x="12" y="36.4" width="1" height="1.3" fill="#f8f8f2" fill-opacity="0.44"/><rect x="13" y="36.4" width="1" height="1.3" fill="#f8f8f2" fill-opacity="0.66"/><rect x="14" y="36.4" width="1" height="1.3" fill="#f92672" fill-opacity="0.44"/><rect x="15" y="36.4" width="1" height="1.3" fill="#f8f8f2" fill-opacity="0.66"/><rect x="16" y="36.4" width="1" height="1.3" fill="#f8f8f2" fill-opacity="0.66"/><rect x="17" y="36.4" width="1" height="1.3" fill="#f8f8f2" fill-opacity="0.66"/><rect x="18" y="36.4" width="1" height="1.3" fill="#f8f8f2" fill-opacity="0.53"/><rect x="19" y="36.4" width="1" height="1.3" fill="#66d9ef" fill-opacity="0.80"/><rect x="20" y="36.4" width="1" height="1.3" fill="#66d9ef" fill-opacity="0.66"/><rect x="21" y="36.4" width="1" height="1.3" fill="#66d9ef" fill-opacity="0.66"/><rect x="22" y="36.4" width="1" height="1.3" fill="#66d9ef" fill-opacity="0.66"/><rect x="23" y="36.4" width="1" height="1.3" fill="#66d9ef" fill-opacity="0.44"/><rect x="24" y="36.4" width="1" height="1.3" fill="#66d9ef" fill-opacity="0.66"/><rect x="25" y="36.4" width="1" height="1.3" fill="#f92672" fill-opacity="0.44"/><rect x="26" y="36.4" width="1" height="1.3" fill="#f8f8f2" fill-opacity="0.66"/><rect x="27" y="36.4" width="1" height="1.3" fill="#f8f8f2" fill-opacity="0.66"/><rect x="28" y="36.4" width="1" height="1.3" fill="#f8f8f2" fill-opacity="0.44"/><rect x="29" y="36.4" width="1" height="1.3" fill="#f8f8f2" fill-opacity="0.66"/><rect x="30" y="36.4" width="1" height="1.3" fill="#f8f8f2" fill-opacity="0.66"/><rect x="31" y="36.4" width="1" height="1.3" fill="#f8f8f2" fill-opacity="0.80"/><rect x="32" y="36.4" width="1" height="1.3" fill="#f8f8f2" fill-opacity="0.66"/><rect x="33" y="36.4" width="1" height="1.3" fill="#f8f8f2" fill-opacity="0.53"/><rect x="34" y="36.4" width="1" height="1.3" fill="#f8f8f2" fill-opacity="0.44"/><rect x="35" y="36.4" width="1" height="1.3" fill="#f8f8f2" fill-opacity="0.53"/><rect x="36" y="36.4" width="1" height="1.3" fill="#f8f8f2" fill-opacity="0.53"/><rect x="37" y="36.4" width="1" height="1.3" fill="#f8f8f2" fill-opacity="0.44"/><rect x="8" y="38.4" width="1" height="1.3" fill="#f8f8f2" fill-opacity="0.53"/><rect x="8" y="42.4" width="1" height="1.3" fill="#f8f8f2" fill-opacity="0.66"/><rect x="9" y="42.4" width="1" height="1.3" fill="#f8f8f2" fill-opacity="0.66"/><rect x="10" y="42.4" width="1" height="1.3" fill="#f8f8f2" fill-opacity="0.80"/><rect x="11" y="42.4" width="1" height="1.3" fill="#f8f8f2" fill-opacity="0.66"/><rect x="12" y="42.4" width="1" height="1.3" fill="#f8f8f2" fill-opacity="0.80"/><rect x="13" y="42.4" width="1" height="1.3" fill="#f8f8f2" fill-opacity="0.66"/><rect x="14" y="42.4" width="1" height="1.3" fill="#f8f8f2" fill-opacity="0.66"/><rect x="15" y="42.4" width="1" height="1.3" fill="#f8f8f2" fill-opacity="0.66"/><rect x="16" y="42.4" width="1" height="1.3" fill="#f8f8f2" fill-opacity="0.66"/><rect x="17" y="42.4" width="1" height="1.3" fill="#f8f8f2" fill-opacity="0.66"/><rect x="18" y="42.4" width="1" height="1.3" fill="#f8f8f2" fill-opacity="0.53"/><rect x="19" y="42.4" width="1" height="1.3" fill="#f8f8f2" fill-opacity="0.44"/><rect x="20" y="42.4" width="1" height="1.3" fill="#f8f8f2" fill-opacity="0.44"/><rect x="21" y="42.4" width="1" height="1.3" fill="#f8f8f2" fill-opacity="0.53"/><rect x="22" y="42.4" width="1" height="1.3" fill="#f8f8f2" fill-opacity="0.44"/><rect x="24" y="42.4" width="1" height="1.3" fill="#75715e" fill-opacity="0.53"/><rect x="25" y="42.4" width="1" height="1.3" fill="#75715e" fill-opacity="0.53"/><rect x="27" y="42.4" width="1" height="1.3" fill="#75715e" fill-opacity="0.80"/><rect x="28" y="42.4" width="1" height="1.3" fill="#75715e" fill-opacity="0.66"/><rect x="8" y="44.4" width="1" height="1.3" fill="#f8f8f2" fill-opacity="0.66"/><rect x="9" y="44.4" width="1" height="1.3" fill="#f8f8f2" fill-opacity="0.66"/><rect x="10" y="44.4" width="1" height="1.3" fill="#f8f8f2" fill-opacity="0.80"/><rect x="11" y="44.4" width="1" height="1.3" fill="#f8f8f2" fill-opacity="0.66"/><rect x="12" y="44.4" width="1" height="1.3" fill="#f8f8f2" fill-opacity="0.80"/><rect x="13" y="44.4" width="1" height="1.3" fill="#f8f8f2" fill-opacity="0.66"/><rect x="14" y="44.4" width="1" height="1.3" fill="#f8f8f2" fill-opacity="0.66"/><rect x="15" y="44.4" width="1" height="1.3" fill="#f8f8f2" fill-opacity="0.66"/><rect x="16" y="44.4" width="1" height="1.3" fill="#f8f8f2" fill-opacity="0.66"/><rect x="17" y="44.4" width="1" height="1.3" fill="#f8f8f2" fill-opacity="0.66"/><rect x="18" y="44.4" width="1" height="1.3" fill="#f8f8f2" fill-opacity="0.53"/><rect x="19" y="44.4" width="1" height="1.3" fill="#f8f8f2" fill-opacity="0.44"/><rect x="20" y="44.4" width="1" height="1.3" fill="#f8f8f2" fill-opacity="0.66"/><rect x="21" y="44.4" width="1" height="1.3" fill="#f8f8f2" fill-opacity="0.53"/><rect x="22" y="44.4" width="1" height="1.3" fill="#f8f8f2" fill-opacity="0.44"/><rect x="24" y="44.4" width="1" height="1.3" fill="#75715e" fill-opacity="0.53"/><rect x="25" y="44.4" width="1" height="1.3" fill="#75715e" fill-opacity="0.53"/><rect x="27" y="44.4" width="1" height="1.3" fill="#75715e" fill-opacity="0.80"/><rect x="28" y="44.4" width="1" height="1.3" fill="#75715e" fill-opacity="0.66"/><rect x="4" y="46.4" width="1" height="1.3" fill="#f8f8f2" fill-opacity="0.53"/><rect x="0" y="48.4" width="1" height="1.3" fill="#f8f8f2" fill-opacity="0.53"/></svg>
<div class="guide" style="left:57px;top:142px;height:278px"></div>
<div class="guide" style="left:85px;top:156px;height:40px"></div>
<div class="guide" style="left:85px;top:240px;height:166px"></div>
<div class="guide" style="left:113px;top:170px;height:12px"></div>
<div class="guide" style="left:113px;top:268px;height:12px"></div>
<div class="guide" style="left:113px;top:338px;height:12px"></div>
<div class="ln" style="top:85px"><span style="color:#f92672">import java.util.ArrayList</span><span style="color:#f8f8f2">;</span></div>
<div class="num" style="top:85px">1</div>
<div class="ln" style="top:99px"><span style="color:#f92672">import java.util.Arrays</span><span style="color:#f8f8f2">;</span></div>
<div class="num" style="top:99px">2</div>
<div class="ln" style="top:113px"></div>
<div class="num" style="top:113px">3</div>
<div class="ln" style="top:127px"><span style="color:#f92672">public class</span><span style="color:#f8f8f2"> Ch03 </span><span class="ul">{</span></div>
<div class="num" style="top:127px">4</div>
<div class="ln" style="top:141px"><span style="color:#f8f8f2">    </span><span style="color:#f92672">public static</span><span style="color:#f8f8f2"> </span><span style="color:#66d9ef;font-style:italic">void</span><span style="color:#f8f8f2"> </span><span style="color:#a6e22e">someMethod</span><span style="color:#f8f8f2">(</span><span style="color:#66d9ef;font-style:italic">ArrayList&lt;? extends Number&gt;</span><span style="color:#f8f8f2"> </span><span style="color:#fd971f;font-style:italic">masN</span><span style="color:#f8f8f2">) {</span></div>
<div class="num" style="top:141px">5</div>
<div class="ln" style="top:155px"><span style="color:#f8f8f2">        </span><span style="color:#f92672">for</span><span style="color:#f8f8f2"> (</span><span style="color:#66d9ef;font-style:italic">Number</span><span style="color:#f8f8f2"> elem </span><span style="color:#f92672">:</span><span style="color:#f8f8f2"> masN) {</span></div>
<div class="num" style="top:155px">6</div>
<div class="ln" style="top:169px"><span style="color:#f8f8f2">            </span><span style="color:#66d9ef;font-style:italic">System</span><span style="color:#f92672">.</span><span style="color:#f8f8f2">out</span><span style="color:#f92672">.</span><span style="color:#f8f8f2">println(elem);</span></div>
<div class="num" style="top:169px">7</div>
<div class="ln" style="top:183px"><span style="color:#f8f8f2">        }</span></div>
<div class="num" style="top:183px">8</div>
<div class="ln" style="top:197px"><span style="color:#f8f8f2">    }</span></div>
<div class="num" style="top:197px">9</div>
<div class="ln" style="top:211px"></div>
<div class="num" style="top:211px">10</div>
<div class="ln" style="top:225px"><span style="color:#f8f8f2">    </span><span style="color:#f92672">public static</span><span style="color:#f8f8f2"> </span><span style="color:#66d9ef;font-style:italic">void</span><span style="color:#f8f8f2"> </span><span style="color:#a6e22e">main</span><span style="color:#f8f8f2">(</span><span style="color:#66d9ef;font-style:italic">String</span><span style="color:#f8f8f2">[] </span><span style="color:#fd971f;font-style:italic">args</span><span style="color:#f8f8f2">) {</span></div>
<div class="num" style="top:225px">11</div>
<div class="ln" style="top:239px"><span style="color:#f8f8f2">        </span><span style="color:#66d9ef;font-style:italic">ArrayList&lt;Integer&gt;</span><span style="color:#f8f8f2"> li </span><span style="color:#f92672">=</span><span style="color:#f8f8f2"> </span><span style="color:#f92672">new</span><span style="color:#f8f8f2"> </span><span style="color:#66d9ef;font-style:italic">ArrayList&lt;&gt;</span><span style="color:#f8f8f2">();</span></div>
<div class="num" style="top:239px">12</div>
<div class="ln" style="top:253px"><span style="color:#f8f8f2">        </span><span style="color:#f92672">for</span><span style="color:#f8f8f2"> (</span><span style="color:#66d9ef;font-style:italic">int</span><span style="color:#f8f8f2"> i </span><span style="color:#f92672">=</span><span style="color:#f8f8f2"> </span><span style="color:#ae81ff">0</span><span style="color:#f8f8f2">; i </span><span style="color:#f92672">&lt;</span><span style="color:#f8f8f2"> </span><span style="color:#ae81ff">10</span><span style="color:#f8f8f2">; i </span><span style="color:#f92672">+=</span><span style="color:#f8f8f2"> </span><span style="color:#ae81ff">2</span><span style="color:#f8f8f2">) {</span></div>
<div class="num" style="top:253px">13</div>
<div class="ln" style="top:267px"><span style="color:#f8f8f2">            li</span><span style="color:#f92672">.</span><span style="color:#f8f8f2">add(</span><span style="color:#66d9ef;font-style:italic">Integer</span><span style="color:#f92672">.</span><span style="color:#f8f8f2">valueOf(i));</span></div>
<div class="num" style="top:267px">14</div>
<div class="ln" style="top:281px"><span style="color:#f8f8f2">        }</span></div>
<div class="num" style="top:281px">15</div>
<div class="ln" style="top:295px"></div>
<div class="num" style="top:295px">16</div>
<div class="ln" style="top:309px"><span style="color:#f8f8f2">        </span><span style="color:#66d9ef;font-style:italic">ArrayList&lt;Double&gt;</span><span style="color:#f8f8f2">  ld </span><span style="color:#f92672">=</span><span style="color:#f8f8f2"> </span><span style="color:#f92672">new</span><span style="color:#f8f8f2"> </span><span style="color:#66d9ef;font-style:italic">ArrayList&lt;&gt;</span><span style="color:#f8f8f2">();</span></div>
<div class="num" style="top:309px">17</div>
<div class="ln" style="top:323px"><span style="color:#f8f8f2">        </span><span style="color:#f92672">for</span><span style="color:#f8f8f2"> (</span><span style="color:#66d9ef;font-style:italic">int</span><span style="color:#f8f8f2"> i </span><span style="color:#f92672">=</span><span style="color:#f8f8f2"> </span><span style="color:#ae81ff">10</span><span style="color:#f8f8f2">; i </span><span style="color:#f92672">&gt;=</span><span style="color:#f8f8f2"> </span><span style="color:#ae81ff">0</span><span style="color:#f8f8f2">; i </span><span style="color:#f92672">-=</span><span style="color:#f8f8f2"> </span><span style="color:#ae81ff">3</span><span style="color:#f8f8f2">) {</span></div>
<div class="num" style="top:323px">18</div>
<div class="ln" style="top:337px"><span style="color:#f8f8f2">            ld</span><span style="color:#f92672">.</span><span style="color:#f8f8f2">add(</span><span style="color:#66d9ef;font-style:italic">Double</span><span style="color:#f92672">.</span><span style="color:#f8f8f2">valueOf(i));</span></div>
<div class="num" style="top:337px">19</div>
<div class="ln" style="top:351px"><span style="color:#f8f8f2">        }</span></div>
<div class="num" style="top:351px">20</div>
<div class="ln" style="top:365px"></div>
<div class="num" style="top:365px">21</div>
<div class="ln" style="top:379px"><span style="color:#f8f8f2">        someMethod(li); </span><span style="color:#75715e">// OK</span></div>
<div class="num" style="top:379px">22</div>
<div class="ln" style="top:393px"><span style="color:#f8f8f2">        someMethod(ld); </span><span style="color:#75715e">// OK</span></div>
<div class="num" style="top:393px">23</div>
<div class="ln" style="top:407px"><span style="color:#f8f8f2">    }</span></div>
<div class="num" style="top:407px">24</div>
<div class="ln" style="top:421px"><span class="ul">}</span></div>
<div class="num" style="top:421px">25</div>
<div id="cursor"></div>
<div class="uline" style="left:183px;top:140px"></div>
<div class="uline" style="left:57px;top:434px"></div>
<div id="scroll"></div>
<div id="thumb"></div>
<div id="status"></div>
<div class="st" style="left:12px">Line 25, Column 2</div>
<div class="st" style="left:684px">Tab Size: 4</div>
<div class="st" style="left:808px">Java</div>
</body></html>
